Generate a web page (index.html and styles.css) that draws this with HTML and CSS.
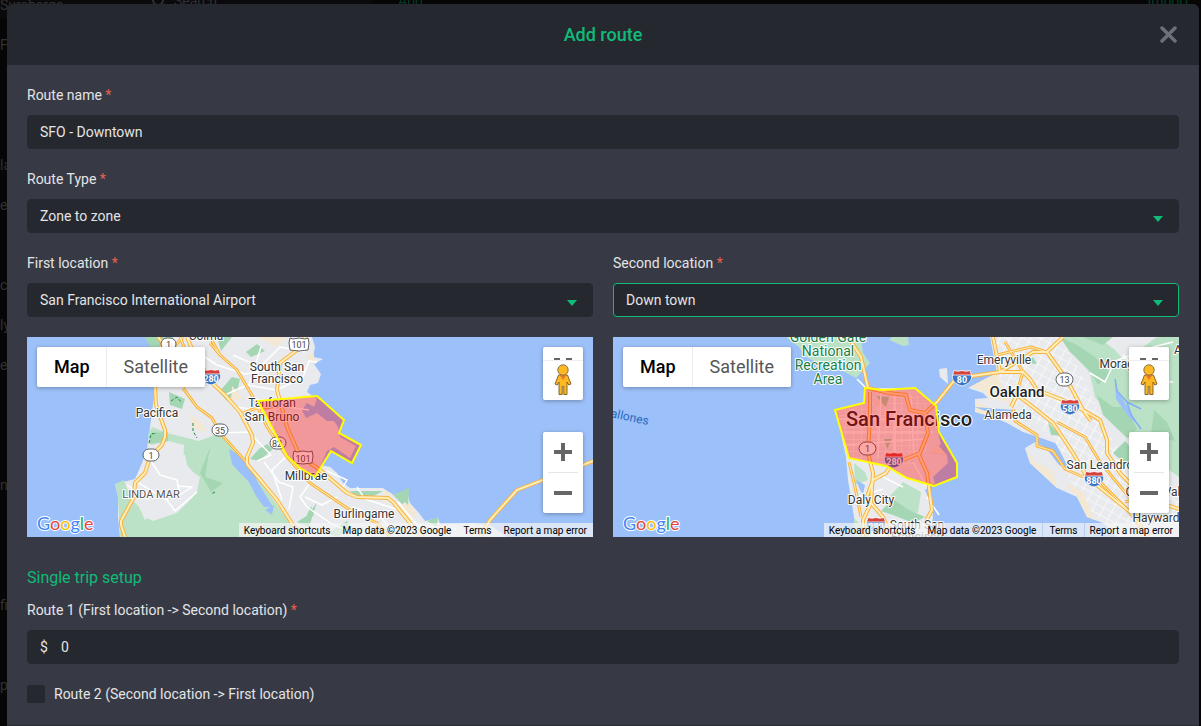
FILE: index.html
```html
<!DOCTYPE html>
<html lang="en">
<head>
<meta charset="utf-8">
<title>Add route</title>
<link rel="stylesheet" href="styles.css">
</head>
<body>
<div class="backdrop" aria-hidden="true">
  <div class="toolbar">
    <span class="toolbar-title">Surcharge</span>
    <span class="toolbar-search"><svg width="14" height="14" viewBox="0 0 14 14"><circle cx="6" cy="6" r="5"/><path d="M10 10l4 4"/></svg>Search</span>
    <span class="toolbar-add">Add</span>
    <span class="toolbar-import">Import</span>
  </div>
  <ul class="side">
    <li>Fa</li><li></li><li></li><li>la</li><li>et</li><li></li><li>ci</li><li>ly</li><li>e</li><li></li><li></li><li>n</li><li></li><li></li><li>fig</li><li></li><li>pe</li>
  </ul>
</div>

<svg class="defs" width="0" height="0" aria-hidden="true">
  <defs>
    <pattern id="streets" width="9" height="8" patternUnits="userSpaceOnUse" patternTransform="rotate(28)">
      <path d="M0 0H9M0 0V8" stroke="#fff" stroke-width="1.2"/>
    </pattern>
    <pattern id="grid" width="8" height="6" patternUnits="userSpaceOnUse">
      <path d="M0 0H8M0 0V6" stroke="#fff" stroke-width="1.2"/>
    </pattern>
    <g id="interstate">
      <path d="M-8 -7.500q4 1.500 8 0q4 1.500 8 0q1 3 1.500 5h-19q.5-2 1.500-5z" fill="#d5413b" stroke="#fff" stroke-width=".8"/>
      <path d="M-9.500 -3h19c1 5-2 9-9.500 11c-7.500-2-10.500-6-9.500-11z" fill="#3a76c4" stroke="#fff" stroke-width=".8"/>
    </g>
    <g id="pegman">
      <path d="M4.500 11h9l3.500 9-2.200 1-1.800-3v12.500h-3.200V22.500h-1.600v8H5V18l-1.800 3L1 20z" fill="#fdb822" stroke="#7c5a1d" stroke-width=".9"/>
      <path d="M5.500 11h7L9 16z" fill="#e57a2c"/>
      <circle cx="9" cy="6" r="5.200" fill="#fdb822" stroke="#7c6a3d" stroke-width=".9"/>
    </g>
  </defs>
</svg>

<main class="modal" role="dialog" aria-labelledby="dialog-title">
  <header class="modal-header">
    <h1 class="modal-title" id="dialog-title">Add route</h1>
    <button class="close" type="button" aria-label="Close"><svg width="20" height="18" viewBox="0 0 20 18"><path d="M3 2l13 13M16 2l-13 13"/></svg></button>
  </header>
  <form class="modal-body">
    <div class="field">
      <label for="route-name">Route name <span class="req">*</span></label>
      <input class="control" id="route-name" type="text" value="SFO - Downtown">
    </div>
    <div class="field">
      <label for="route-type">Route Type <span class="req">*</span></label>
      <div class="select-wrap"><select class="control" id="route-type"><option>Zone to zone</option></select></div>
    </div>
    <div class="columns">
      <section class="column">
        <div class="field">
          <label for="first">First location <span class="req">*</span></label>
          <div class="select-wrap"><select class="control" id="first"><option>San Francisco International Airport</option></select></div>
        </div>
        <div class="map">
          <svg class="map-art" viewBox="0 0 566 200" preserveAspectRatio="xMidYMid slice" role="img" aria-label="Map of San Francisco International Airport zone">
            <path class="land" d="M122 0L127 30L127 60L123 90L120 113L115 126L108 142L88 147L91 160L91 180L93 200H480L470 193L463 188L446 186L413 187L411 181L398 184L392 176L383 166L380 153L366 158L356 151H323L316 146L310 136L303 130L294 128L300 114L307 110L323 121L329 109L313 100L311 90L307 84L300 84L290 76L279 81L275 73L280 66L287 70L290 62L280 55L283 48L291 46L294 37L287 27L296 22L286 20L288 10L285 0Z"/>
            <path class="green" d="M88 147L97 143L103 160L112 170L118 183L145 166L156 170L170 155L173 140L156 128L157 108L142 104L124 108L121 98L125 90L140 96L172 104L193 96L206 108L220 128L245 161L263 186L272 200H93L91 160Z"/>
            <path class="forest" d="M142 55L158 62L155 72L143 68ZM183 110L178 140L196 146L184 155L173 136ZM124 96L141 95V104L122 107ZM192 55L205 40L213 42L210 55L200 64ZM223 122L232 112L240 107L246 112L232 124ZM281 178L290 165L282 190L270 185ZM118 0H146L141 17H127ZM219 15L230 7L238 14L224 20ZM190 0L205 0L194 14ZM366 158L382 151L381 171L374 166ZM400 184L411 180L410 190ZM323 154H356L345 160H330ZM300 196L320 184L325 192L310 200ZM287 178L276 187L284 169Z"/>
            <path class="land" d="M121 143L130 122L146 112L158 118L160 128L172 142L160 150L166 160L150 176L126 184L118 180L126 170L112 162L104 148Z"/>
            <path class="sand" d="M163 77L175 86L180 96L165 90ZM205 49L216 61L204 65ZM230 0H260L250 10ZM357 153L366 157L356 160ZM383 166L388 175L374 173ZM286 15L289 27L278 20ZM370 172L378 165L388 176L384 188ZM444 188H462V192Z"/>
            <path class="water" d="M202 112L212 118L226 132L230 144L246 170L237 170L229 159L222 145L213 136L205 127ZM238 173L247 168L245 178Z"/>
            <g class="streets">
              <path d="M131 20L170 15L190 28L218 37L248 32M198 58L220 48L250 53L276 40L282 24L290 25M234 10L222 48M206 18L233 30L253 10L278 15M213 75L247 68L282 73M193 96L222 95L244 118L230 124M210 70L240 75L263 63M237 125L252 145L266 150L262 172M260 119L245 133L255 163M283 146L273 160L280 170L305 187L335 200M300 134L320 143L316 150M310 160L295 168L278 160M325 170L353 180L368 195M330 150L338 162L375 174M371 165L390 188L430 192M124 124L133 138L150 143L153 158L165 150L150 149M110 145L125 154L140 163L148 174L170 155M250 60L245 92M100 148L122 163"/>
            </g>
            <path class="dash" d="M144 64l6-4 4 5M166 86v8l4 7M122 106l2-9 6-1M188 155l-4 2"/>
            <g class="road"><g id="roads-a">
              <path d="M131 0L135 5L128 50L129 68L138 93V100L135 108L123 120L118 136L108 146L107 160L94 184V188L98 200"/>
              <path class="thin" d="M156 0L138 20M156 51L170 70L185 81L193 96L220 126M183 6L193 18L210 33L226 60L240 90L260 120L283 146L323 173L350 186L363 200M153 0L165 30L185 46M213 77L227 72L254 69M183 0L193 18"/>
              <path d="M160 0L165 12L185 46L198 58L213 75L225 98L226 106L220 120V127L250 163L266 188L280 200"/>
              <path d="M278 0L270 13L253 26L250 53L260 90L270 113L280 124L293 133L320 156L330 160L361 161L366 165L383 186L396 200"/>
              <path d="M453 200L463 183L490 153L516 143L556 128L566 124"/>
            </g></g>
            <use href="#roads-a" class="road-core"/>
            <g class="shield">
              <rect x="134" y="1" width="15" height="12" rx="6"/><rect x="185" y="87" width="16" height="12" rx="6"/><rect x="116" y="112" width="16" height="12" rx="6"/><rect x="243" y="100" width="16" height="12" rx="6"/><path d="M263 1l3 1 6-1 6 1 3-1 1 5-1 7q-9 2-18 0l-1-7zM267 114l3 1 6-1 6 1 3-1 1 5-1 7q-9 2-18 0l-1-7z"/>
              <text x="141.500" y="11">1</text><text x="193" y="97">35</text><text x="124" y="122">1</text><text x="250" y="110">82</text><text x="272" y="11">101</text><text x="276" y="125">101</text>
            </g>
            <use href="#interstate" x="184" y="40"/><text class="inter" x="184" y="45">280</text>
            <g class="label">
              <text x="179" y="3">Colma</text><text x="250" y="34">South San</text><text x="250" y="46">Francisco</text><text x="245" y="70">Tanforan</text><text x="245" y="84">San Bruno</text><text x="130" y="80">Pacifica</text><text x="279" y="143">Millbrae</text><text x="337" y="181">Burlingame</text><text class="town" x="124" y="161">LINDA MAR</text>
            </g>
            <path class="zone" d="M231 64L290 59L317 83L312 96L334 108L325 126L304 114L288 140L273 131L260 119Z"/>
          </svg>
          <div class="map-ui">
            <div class="map-types"><button type="button" class="active">Map</button><button type="button">Satellite</button></div>
            <div class="map-tools">
              <button type="button" class="peg" aria-label="Street View"><svg width="40" height="53" viewBox="0 0 40 53"><path d="M11 11h6v2h-6zM23 11h6v2h-6z" fill="#666"/><path d="M0 13.500h40" stroke="#eee"/><use href="#pegman" x="11" y="17"/></svg></button>
              <div class="zoom"><button type="button" aria-label="Zoom in"><svg width="18" height="18" viewBox="0 0 18 18"><path d="M7 0h4v7h7v4h-7v7H7v-7H0V7h7z"/></svg></button><button type="button" aria-label="Zoom out"><svg width="18" height="18" viewBox="0 0 18 18"><path d="M0 7h18v4H0z"/></svg></button></div>
            </div>
            <span class="google"><b>G</b><b>o</b><b>o</b><b>g</b><b>l</b><b>e</b></span>
            <div class="credits"><button type="button">Keyboard shortcuts</button><span>Map data ©2023 Google</span><a href="#terms">Terms</a><a href="#report">Report a map error</a></div>
          </div>
        </div>
      </section>
      <section class="column">
        <div class="field">
          <label for="second">Second location <span class="req">*</span></label>
          <div class="select-wrap"><select class="control focused" id="second"><option>Down town</option></select></div>
        </div>
        <div class="map">
          <svg class="map-art" viewBox="0 0 566 200" preserveAspectRatio="xMidYMid slice" role="img" aria-label="Map of Down town zone">
            <path class="land" d="M223 73L251 65L253 51L293 51L302 51L322 68L325 96L328 107L317 116L334 118L335 126L320 140L322 146L312 153L319 170L320 180L317 200H241V180L235 143L233 120Z"/>
            <path fill="url(#grid)" d="M226 75L251 68L257 55H300L318 70L316 110L300 130L270 128L236 119Z"/>
            <path class="land" d="M377 0L384 36L370 43L355 51L370 56L375 61L362 62V75L377 79L400 88L424 104L412 111L417 126L444 151L464 160L474 180L490 186L504 200H566V0Z"/>
            <path fill="url(#streets)" d="M380 0H447L470 40L500 105L530 145L566 160V200H508L475 172L455 140L440 105L410 70L380 60L388 35Z"/>
            <path class="sand" d="M384 36L372 42L357 50L371 53L374 60L398 66L390 50ZM362 64V75L377 79L400 88L403 84ZM412 111L417 126L444 151L440 134L422 125ZM451 145L464 160L474 180L482 183L470 155ZM260 68L268 60L276 63L272 70ZM325 108L317 116L334 118Z"/>
            <path class="water" d="M361 70L402 73L416 86L420 94L443 107L450 120L456 132L446 128L433 111L425 107L411 96L397 86L378 76ZM424 104L440 101L445 113L432 110Z"/>
            <path class="land" d="M382 79L410 82L428 92L440 98L442 106L428 101L410 95Z"/>
            <path class="green" d="M173 0L186 10L193 20L213 30L226 32L243 41L257 26L250 16L248 0ZM276 3L290 9L296 8L295 0H279ZM447 0L457 13L477 36L482 60L507 90L524 113L545 125L566 140V0H544L530 10L539 35L520 34L502 13L490 4L488 0ZM278 158L290 145L308 155L305 176L282 171L270 163ZM241 126L252 135L255 143L242 148ZM241 181L250 190L266 187L256 200H241Z"/>
            <path class="forest" d="M447 0L457 15L478 35L485 48L498 37L482 20L464 8ZM484 58L500 70L513 70L524 92L514 101L490 78ZM500 116L512 104L534 130L520 134ZM470 0L490 8L500 0ZM268 174L280 162L294 172L312 180L300 186L280 178ZM435 85L448 99L438 98ZM410 26L420 20L424 27ZM263 59L276 60L273 70ZM271 102H279L274 112ZM541 73L554 85L562 104L538 98Z"/>
            <path class="water" d="M243 143L252 148L250 157L247 153ZM502 42L505 55L516 72L525 88L516 80L503 62ZM260 190L268 181L266 195Z"/>
            <path class="land" d="M326 32L334 31L335 47L327 40Z"/>
            <g class="streets">
              <path d="M244 42L253 51M225 82L310 82M228 95H320M232 108L313 102M268 55L265 120M282 54V120M298 58L301 120M300 125L314 150M270 140L290 150M244 160L270 152M314 160L326 178M520 30L540 10L560 5M510 18L535 45L560 45M477 36L492 45L502 24L524 16"/>
            </g>
            <path class="creek" d="M502 42L504 54L514 65L518 78L528 92M514 65L528 72"/>
            <g class="road"><g id="roads-b">
              <path d="M235 0L248 20L255 51L276 56L293 58L297 73L312 76L324 65L340 45L352 40L387 35L380 0"/>
              <path d="M257 55V78L255 116L260 136L258 166L250 183V200M260 143L273 136L280 125L290 123L307 116L315 96L312 76M305 116L314 136L319 173L314 182L317 200M260 143L252 165M258 166L270 180L278 200"/>
              <path d="M387 35L410 35L417 42L424 53L450 63L470 73L487 83L494 103V116L507 136L530 160L566 172M387 35L420 15L434 15L450 0M434 15L454 43L470 73L478 84"/>
              <path d="M398 70L404 58L424 73L440 86L460 116L474 140L517 175L535 200"/>
              <path class="thin" d="M236 125L242 150L248 180M384 18L418 10L434 15M392 5L410 35L403 58M400 72L402 84L424 98V109L440 114L452 132L470 140M444 85L472 100L487 125L516 160M484 142L517 175L530 183M512 165L540 158"/>
            </g></g>
            <use href="#roads-b" class="road-core"/>
            <g class="shield"><rect x="246" y="105" width="17" height="13" rx="7"/><rect x="443" y="36" width="17" height="13" rx="7"/><text x="254.500" y="115">1</text><text x="451.500" y="46">13</text></g>
            <use href="#interstate" x="281" y="123"/><text class="inter" x="281" y="128">280</text>
            <use href="#interstate" x="349" y="41"/><text class="inter" x="349" y="46">80</text>
            <use href="#interstate" x="457" y="70"/><text class="inter" x="457" y="75">580</text>
            <use href="#interstate" x="481" y="142"/><text class="inter" x="481" y="147">880</text>
            <use href="#interstate" x="263" y="188"/><text class="inter" x="263" y="193">280</text>
            <g class="label">
              <text x="391" y="27">Emeryville</text><text x="395" y="82">Alameda</text><text x="258" y="167">Daly City</text><text x="487" y="132">San Leandro</text><text x="507" y="31">Moraga</text><text x="565" y="17">A</text><text x="543" y="185">Hayward</text><text x="540" y="159">Castro Val</text><text x="304" y="192">South San</text><text x="304" y="204">Francisco</text>
              <text class="city" x="404" y="60">Oakland</text><text class="big-city" x="296" y="89">San Francisco</text>
              <g class="park"><text x="215" y="5">Golden Gate</text><text x="215" y="19">National</text><text x="215" y="33">Recreation</text><text x="215" y="47">Area</text></g>
              <text class="sea" x="16" y="84" transform="rotate(12 16 84)">allones</text>
            </g>
            <path class="zone" d="M222 73L251 66L252 51L270 53L302 51L323 69L326 95L344 126V140L321 149L294 141L273 129L236 121Z"/>
          </svg>
          <div class="map-ui">
            <div class="map-types"><button type="button" class="active">Map</button><button type="button">Satellite</button></div>
            <div class="map-tools">
              <button type="button" class="peg" aria-label="Street View"><svg width="40" height="53" viewBox="0 0 40 53"><path d="M11 11h6v2h-6zM23 11h6v2h-6z" fill="#666"/><path d="M0 13.500h40" stroke="#eee"/><use href="#pegman" x="11" y="17"/></svg></button>
              <div class="zoom"><button type="button" aria-label="Zoom in"><svg width="18" height="18" viewBox="0 0 18 18"><path d="M7 0h4v7h7v4h-7v7H7v-7H0V7h7z"/></svg></button><button type="button" aria-label="Zoom out"><svg width="18" height="18" viewBox="0 0 18 18"><path d="M0 7h18v4H0z"/></svg></button></div>
            </div>
            <span class="google"><b>G</b><b>o</b><b>o</b><b>g</b><b>l</b><b>e</b></span>
            <div class="credits divided"><button type="button">Keyboard shortcuts</button><span>Map data ©2023 Google</span><a href="#terms">Terms</a><a href="#report">Report a map error</a></div>
          </div>
        </div>
      </section>
    </div>
    <h2 class="section-title">Single trip setup</h2>
    <div class="field">
      <label for="price">Route 1 (First location -&gt; Second location) <span class="req">*</span></label>
      <div class="control money"><span>$</span><input id="price" type="text" value="0"></div>
    </div>
    <div class="check"><input type="checkbox" id="route2"><label for="route2">Route 2 (Second location -&gt; First location)</label></div>
  </form>
</main>
</body>
</html>
```
FILE: styles.css
```css
* { box-sizing: border-box; }
body {
  margin: 0;
  min-height: 100vh;
  background: #060607;
  color: #e4e4e5;
  font: 14px/20px Roboto, "Liberation Sans", sans-serif;
}
button, input, select { font: inherit; color: inherit; }
button { border: 0; padding: 0; cursor: pointer; }
.defs { position: absolute; }

/* dimmed page behind the dialog */
.backdrop {
  position: absolute;
  inset: 0;
  overflow: hidden;
  color: #303134;
}
.toolbar { display: flex; height: 24px; margin-top: -6px; }
.toolbar-title { width: 142px; line-height: 22px; background: #0a0a0b; }
.toolbar-search {
  display: flex;
  align-items: center;
  gap: 8px;
  width: 230px;
  height: 14px;
  padding-left: 10px;
  background: #0a0a0c;
}
.toolbar-search svg { fill: none; stroke: #303134; stroke-width: 2; }
.toolbar-add { margin-left: 26px; line-height: 14px; color: #063a25; }
.toolbar-import { margin-left: auto; margin-right: 12px; line-height: 14px; color: #063a25; }
.side { margin: 7px 0 0; padding: 0; list-style: none; }
.side li { display: flex; align-items: center; height: 40px; }

.modal {
  position: relative;
  min-height: 100vh;
  margin: 0 2px 0 7px;
  border-top: 4px solid transparent;
  border-bottom: 1px solid #2c2e36;
  border-radius: 10px 10px 0 0;
  background: #373a45 padding-box;
}
.modal-header {
  display: grid;
  grid-template-columns: 1fr auto 1fr;
  align-items: center;
  height: 61px;
  padding: 0 20px;
  background: #26282f;
  border-radius: 6px 6px 0 0;
}
.modal-title {
  grid-column: 2;
  margin: 0;
  color: #10bb78;
  font-size: 18px;
  font-weight: 500;
  line-height: 24px;
}
.close { justify-self: end; display: flex; background: none; }
.close svg { fill: none; stroke: #6d7079; stroke-width: 3.5; stroke-linecap: round; }
.modal-body { padding: 20px; }
.field { display: flex; flex-direction: column; gap: 10px; margin-bottom: 20px; }
.req { color: #e8614f; }
.control {
  display: block;
  width: 100%;
  height: 34px;
  margin: 0;
  padding: 0 12px;
  border: 1px solid #26282f;
  border-radius: 4px;
  background: #26282f;
  outline: 0;
  appearance: none;
}
.focused { border-color: #10bb78; }
.select-wrap { display: grid; align-items: center; }
.select-wrap > .control, .select-wrap::after { grid-area: 1 / 1; }
.select-wrap::after {
  content: "";
  justify-self: end;
  margin: 5px 16px 0 0;
  border: 5px solid transparent;
  border-top: 6px solid #10bb78;
  border-bottom: 0;
  pointer-events: none;
}
.columns { display: grid; grid-template-columns: 1fr 1fr; gap: 20px; }

.map { display: grid; height: 200px; overflow: hidden; background: #9cc0f9; }
.map > * { grid-area: 1 / 1; min-width: 0; min-height: 0; }
.map-art { width: 100%; height: 200px; }
.land { fill: #e8eaed; }
.green { fill: #bbe2c6; }
.forest { fill: #a5d6b3; }
.sand { fill: #f3e8d3; }
.water { fill: #9cc0f9; }
.streets { fill: none; stroke: #fff; stroke-width: 1.5; stroke-linejoin: round; }
.dash { fill: none; stroke: #1b8b44; stroke-dasharray: 3 2; }
.creek { fill: none; stroke: #83b0f5; stroke-width: 1.5; }
.road, .road-core { fill: none; stroke-linejoin: round; }
.road { --thin: 3px; stroke: #f9b33c; stroke-width: 4px; }
.road-core { --thin: 1px; stroke: #ffeeba; stroke-width: 2px; }
.thin { stroke-width: var(--thin); }
.shield rect, .shield path { fill: #fff; stroke: #5f6368; }
.shield text { font-size: 9px; fill: #444; text-anchor: middle; }
.inter { font-size: 9px; font-weight: 700; fill: #fff; text-anchor: middle; }
.label text {
  font-size: 12px;
  fill: #333;
  text-anchor: middle;
  stroke: #fff;
  stroke-width: 2px;
  stroke-linejoin: round;
  paint-order: stroke;
}
.label .town { font-size: 11px; fill: #555; }
.label .city { font-size: 15px; font-weight: 500; fill: #202124; }
.label .big-city { font-size: 20px; font-weight: 500; fill: #202124; }
.label .park text { font-size: 14px; fill: #188045; }
.label .sea { font-size: 12px; fill: #2868bd; stroke: none; }
.zone { fill: #ff0000; fill-opacity: .35; stroke: #ffff00; stroke-width: 2; }

.map-ui {
  display: grid;
  grid-template-columns: auto 1fr auto;
  grid-template-rows: 1fr auto;
  position: relative;
}
.map-types { display: flex; align-self: start; margin: 10px 0 0 10px; height: 40px; border-radius: 2px; box-shadow: 0 1px 4px rgba(0,0,0,.3); }
.map-types button { padding: 0 17px; background: #fff; color: #565656; font-size: 18px; border-radius: 0 2px 2px 0; }
.map-types .active { color: #000; font-weight: 500; border-radius: 2px 0 0 2px; box-shadow: inset -1px 0 #ececec; }
.map-tools { grid-column: 3; grid-row: 1; display: flex; flex-direction: column; gap: 32px; padding: 10px 10px 0 0; height: 176px; }
.peg, .zoom { width: 40px; background: #fff; border-radius: 2px; box-shadow: 0 1px 4px rgba(0,0,0,.3); overflow: hidden; }
.peg { flex: none; height: 53px; }
.peg svg { display: block; }
.zoom { display: flex; flex: none; flex-direction: column; height: 81px; padding: 0 5px; }
.zoom button { display: grid; place-items: center; flex: 1; background: none; }
.zoom button + button { border-top: 1px solid #e6e6e6; }
.zoom svg { fill: #666; }
.google { grid-row: 2; grid-column: 1; align-self: end; padding: 0 0 4px 10px; font: 18px/20px Lato, sans-serif; }
.google b { font-weight: 400; color: #4285f4; -webkit-text-stroke: 2px #fff; paint-order: stroke; }
.google b:nth-child(2), .google b:nth-child(6) { color: #ea4335; }
.google b:nth-child(3) { color: #fbbc04; }
.google b:nth-child(5) { color: #34a853; }
.credits { position: absolute; right: 0; bottom: 0; display: flex; height: 14px; white-space: nowrap; }
.credits > * { height: 14px; padding: 0 6px; background: rgba(245,245,245,.7); color: #000; text-decoration: none; font-size: 10px; line-height: 15px; }
.credits > :first-child { padding-left: 5px; }
.divided > a { border-left: 1px solid #b8cdf0; }
.divided > a:last-child { padding-left: 5px; }

.section-title { margin: 31px 0 12px; color: #10bb78; font-size: 16px; font-weight: 400; line-height: 20px; }
.money { display: flex; align-items: center; gap: 13px; }
.money input { flex: 1; min-width: 0; padding: 0; border: 0; background: none; outline: 0; }
.check { display: flex; align-items: center; gap: 9px; }
.check input { width: 18px; height: 18px; margin: 0; appearance: none; background: #26282f; border-radius: 2px; }
```
